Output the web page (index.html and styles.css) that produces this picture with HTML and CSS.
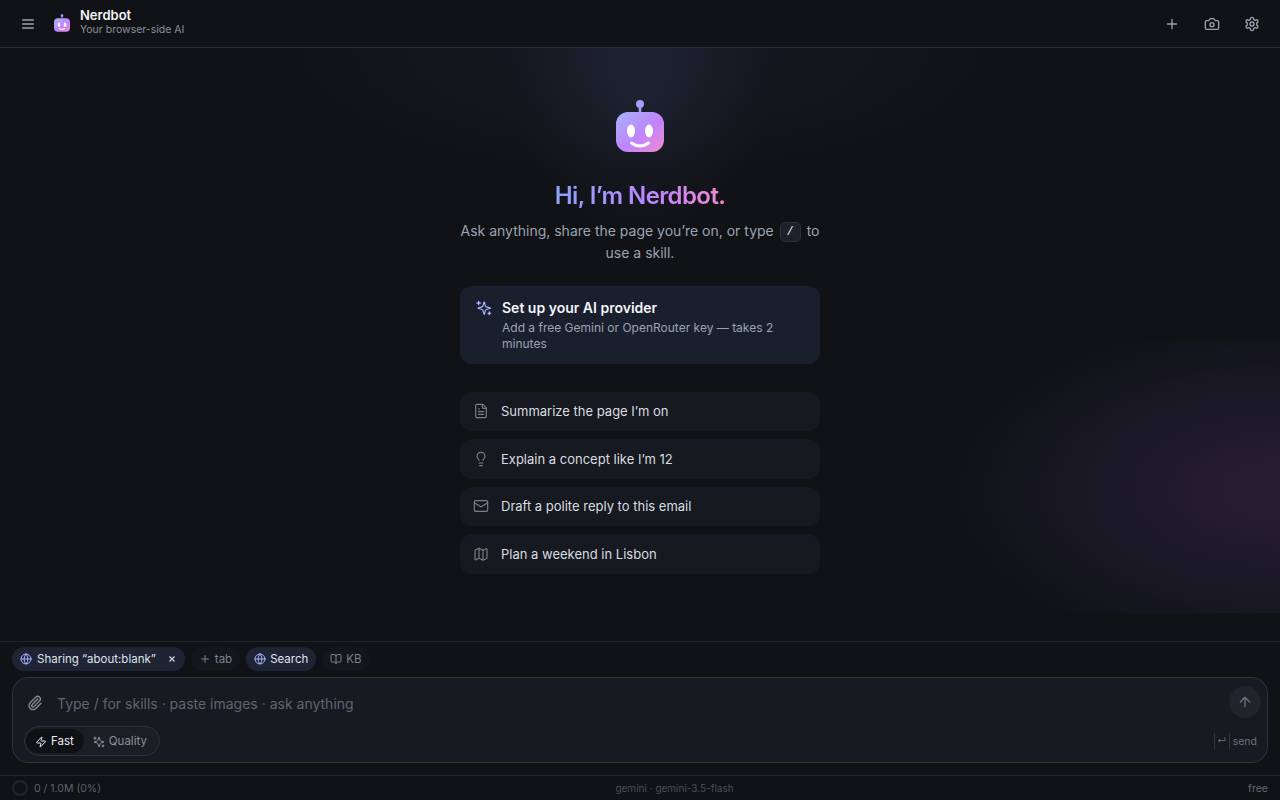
FILE: index.html
```html
<!DOCTYPE html>
<html lang="en">
<head>
<meta charset="utf-8">
<title>Nerdbot</title>
<link rel="stylesheet" href="styles.css">
</head>
<body>
<div class="app">
  <header class="topbar">
    <button class="icon-btn menu"><svg width="16" height="16" viewBox="0 0 24 24" class="ic"><path d="M4 6h16M4 12h16M4 18h16"/></svg></button>
    <svg class="brand-logo" width="16" height="18" viewBox="0 0 48 54"><defs><linearGradient id="g1" x1="0" y1="0" x2="1" y2="1"><stop offset="0" stop-color="#a5b4fc"/><stop offset="0.55" stop-color="#c084fc"/><stop offset="1" stop-color="#f08ad0"/></linearGradient></defs><circle cx="24" cy="5" r="4" fill="#a5a0fa"/><rect x="22.7" y="6" width="2.6" height="8" fill="#a5a0fa"/><rect y="13" width="48" height="40" rx="12" fill="url(#g1)"/><ellipse cx="15" cy="32" rx="4" ry="6.5" fill="#fff"/><ellipse cx="33" cy="32" rx="4" ry="6.5" fill="#fff"/><path d="M15.5 44q8.5 6 17 0" stroke="#fff" stroke-width="3" fill="none" stroke-linecap="round"/></svg>
    <div class="brand-text">
      <div class="brand-name">Nerdbot</div>
      <div class="brand-sub">Your browser-side AI</div>
    </div>
    <div class="top-actions">
      <button class="icon-btn"><svg width="16" height="16" viewBox="0 0 24 24" class="ic"><path d="M12 5v14M5 12h14"/></svg></button>
      <button class="icon-btn"><svg width="16" height="16" viewBox="0 0 24 24" class="ic"><path d="M14.5 4h-5L7 7H4a2 2 0 0 0-2 2v9a2 2 0 0 0 2 2h16a2 2 0 0 0 2-2V9a2 2 0 0 0-2-2h-3z"/><circle cx="12" cy="13" r="3"/></svg></button>
      <button class="icon-btn"><svg width="16" height="16" viewBox="0 0 24 24" class="ic"><path d="M12.22 2h-.44a2 2 0 0 0-2 2v.18a2 2 0 0 1-1 1.73l-.43.25a2 2 0 0 1-2 0l-.15-.08a2 2 0 0 0-2.73.73l-.22.38a2 2 0 0 0 .73 2.73l.15.1a2 2 0 0 1 1 1.72v.51a2 2 0 0 1-1 1.74l-.15.09a2 2 0 0 0-.73 2.73l.22.38a2 2 0 0 0 2.73.73l.15-.08a2 2 0 0 1 2 0l.43.25a2 2 0 0 1 1 1.73V20a2 2 0 0 0 2 2h.44a2 2 0 0 0 2-2v-.18a2 2 0 0 1 1-1.73l.43-.25a2 2 0 0 1 2 0l.15.08a2 2 0 0 0 2.73-.73l.22-.39a2 2 0 0 0-.73-2.73l-.15-.08a2 2 0 0 1-1-1.74v-.5a2 2 0 0 1 1-1.74l.15-.09a2 2 0 0 0 .73-2.73l-.22-.38a2 2 0 0 0-2.73-.73l-.15.08a2 2 0 0 1-2 0l-.43-.25a2 2 0 0 1-1-1.73V4a2 2 0 0 0-2-2z"/><circle cx="12" cy="12" r="3"/></svg></button>
    </div>
  </header>

  <main class="welcome">
    <svg class="hero-logo" width="48" height="54" viewBox="0 0 48 54"><defs><linearGradient id="g2" x1="0" y1="0" x2="1" y2="1"><stop offset="0" stop-color="#a5b4fc"/><stop offset="0.55" stop-color="#c084fc"/><stop offset="1" stop-color="#f08ad0"/></linearGradient></defs><circle cx="24" cy="5" r="4" fill="#a5a0fa"/><rect x="22.7" y="6" width="2.6" height="8" fill="#a5a0fa"/><rect y="13" width="48" height="40" rx="12" fill="url(#g2)"/><ellipse cx="15" cy="32" rx="4" ry="6.5" fill="#fff"/><ellipse cx="33" cy="32" rx="4" ry="6.5" fill="#fff"/><path d="M15.5 44q8.5 6 17 0" stroke="#fff" stroke-width="3" fill="none" stroke-linecap="round"/></svg>
    <h1 class="hero-title">Hi, I’m Nerdbot.</h1>
    <p class="hero-sub">Ask anything, share the page you’re on, or type <kbd class="key">/</kbd> to use a skill.</p>
    <div class="setup-card">
      <svg class="setup-ic" width="16" height="16" viewBox="0 0 24 24"><path d="M9.9 15.5a2 2 0 0 0-1.4-1.4l-6.1-1.6a.5.5 0 0 1 0-1l6.1-1.6a2 2 0 0 0 1.4-1.4l1.6-6.1a.5.5 0 0 1 1 0l1.6 6.1a2 2 0 0 0 1.4 1.4l6.1 1.6a.5.5 0 0 1 0 1l-6.1 1.6a2 2 0 0 0-1.4 1.4l-1.6 6.1a.5.5 0 0 1-1 0z" transform="translate(1.5 1.5) scale(.9)"/><path d="M4 2v5M1.5 4.5h5M20 18v4M18 20h4"/></svg>
      <div>
        <div class="setup-title">Set up your AI provider</div>
        <div class="setup-desc">Add a free Gemini or OpenRouter key — takes 2 minutes</div>
      </div>
    </div>
    <div class="suggestions">
      <div class="suggestion"><svg width="16" height="16" viewBox="0 0 24 24" class="ic"><path d="M15 2H6a2 2 0 0 0-2 2v16a2 2 0 0 0 2 2h12a2 2 0 0 0 2-2V7z"/><path d="M14 2v4a2 2 0 0 0 2 2h4M16 13H8M16 17H8M10 9H8"/></svg>Summarize the page I’m on</div>
      <div class="suggestion"><svg width="16" height="16" viewBox="0 0 24 24" class="ic"><path d="M15 14c.2-1 .7-1.7 1.5-2.5 1-.9 1.5-2.2 1.5-3.5A6 6 0 0 0 6 8c0 1 .2 2.2 1.5 3.5.7.7 1.3 1.5 1.5 2.5M9 18h6M10 22h4"/></svg>Explain a concept like I’m 12</div>
      <div class="suggestion"><svg width="16" height="16" viewBox="0 0 24 24" class="ic"><rect x="2" y="4" width="20" height="16" rx="2"/><path d="m22 7-8.97 5.7a1.94 1.94 0 0 1-2.06 0L2 7"/></svg>Draft a polite reply to this email</div>
      <div class="suggestion"><svg width="16" height="16" viewBox="0 0 24 24" class="ic"><path d="M14.1 5.9a2 2 0 0 0 1.8 0l3.7-1.8A1 1 0 0 1 21 5v12.8a1 1 0 0 1-.6.9l-4.5 2.2a2 2 0 0 1-1.8 0l-4.2-2a2 2 0 0 0-1.8 0l-3.7 1.8A1 1 0 0 1 3 19.8V7a1 1 0 0 1 .6-.9l4.5-2.2a2 2 0 0 1 1.8 0zM15 6v15M9 3v15"/></svg>Plan a weekend in Lisbon</div>
    </div>
  </main>

  <section class="composer-area">
    <div class="chips">
      <span class="chip on share"><svg width="12" height="12" viewBox="0 0 24 24" class="ic blue"><circle cx="12" cy="12" r="10"/><path d="M12 2a14.5 14.5 0 0 0 0 20 14.5 14.5 0 0 0 0-20M2 12h20"/></svg>Sharing “about:blank”<svg class="chip-x" width="10" height="10" viewBox="0 0 24 24"><path d="M6 6l12 12M18 6L6 18"/></svg></span>
      <span class="chip off"><svg width="12" height="12" viewBox="0 0 24 24" class="ic"><path d="M12 5v14M5 12h14"/></svg>tab</span>
      <span class="chip on"><svg width="12" height="12" viewBox="0 0 24 24" class="ic blue"><circle cx="12" cy="12" r="10"/><path d="M12 2a14.5 14.5 0 0 0 0 20 14.5 14.5 0 0 0 0-20M2 12h20"/></svg>Search</span>
      <span class="chip off"><svg width="12" height="12" viewBox="0 0 24 24" class="ic"><path d="M12 7v14M3 18a1 1 0 0 1-1-1V4a1 1 0 0 1 1-1h5a4 4 0 0 1 4 4 4 4 0 0 1 4-4h5a1 1 0 0 1 1 1v13a1 1 0 0 1-1 1h-6a3 3 0 0 0-3 3 3 3 0 0 0-3-3z"/></svg>KB</span>
    </div>
    <div class="composer">
      <div class="composer-top">
        <svg class="clip" width="16" height="16" viewBox="0 0 24 24"><path d="M13.234 20.252 21 12.3M16 6l-8.414 8.586a2 2 0 0 0 0 2.828 2 2 0 0 0 2.828 0l8.414-8.586a4 4 0 0 0 0-5.656 4 4 0 0 0-5.656 0l-8.415 8.585a6 6 0 1 0 8.486 8.486"/></svg>
        <div class="placeholder">Type / for skills · paste images · ask anything</div>
        <button class="send"><svg width="16" height="16" viewBox="0 0 24 24" class="ic"><path d="M12 19V5M5 12l7-7 7 7"/></svg></button>
      </div>
      <div class="composer-bottom">
        <div class="mode">
          <span class="mode-btn active"><svg width="12" height="12" viewBox="0 0 24 24" class="ic"><path d="M4 14a1 1 0 0 1-.78-1.63l9.9-10.2a.5.5 0 0 1 .86.46l-1.92 6.02A1 1 0 0 0 13 10h7a1 1 0 0 1 .78 1.63l-9.9 10.2a.5.5 0 0 1-.86-.46l1.92-6.02A1 1 0 0 0 11 14z"/></svg>Fast</span>
          <span class="mode-btn"><svg width="12" height="12" viewBox="0 0 24 24" class="ic"><path d="M9.9 15.5a2 2 0 0 0-1.4-1.4l-6.1-1.6a.5.5 0 0 1 0-1l6.1-1.6a2 2 0 0 0 1.4-1.4l1.6-6.1a.5.5 0 0 1 1 0l1.6 6.1a2 2 0 0 0 1.4 1.4l6.1 1.6a.5.5 0 0 1 0 1l-6.1 1.6a2 2 0 0 0-1.4 1.4l-1.6 6.1a.5.5 0 0 1-1 0z"/><path d="M4 2v5M1.5 4.5h5M20 18v4M18 20h4"/></svg>Quality</span>
        </div>
        <div class="send-hint"><kbd class="hint-key">↵</kbd>send</div>
      </div>
    </div>
  </section>

  <footer class="status">
    <div class="status-left"><span class="ring"></span>0 / 1.0M (0%)</div>
    <div class="status-mid">gemini · gemini-3.5-flash</div>
    <div class="status-right">free</div>
  </footer>
</div>
</body>
</html>
```

FILE: styles.css
```css
* { box-sizing: border-box; }
html, body { margin: 0; height: 100%; }
body { background: #101216; color: #e5e7eb; font-family: Inter, "Liberation Sans", sans-serif; overflow: hidden; }
.ic { fill: none; stroke: currentColor; stroke-width: 2; stroke-linecap: round; stroke-linejoin: round; flex: none; }
.ic.blue { color: #a5b4fc; }
button { background: none; border: 0; padding: 0; color: inherit; font: inherit; }
.app {
  height: 800px; display: flex; flex-direction: column;
  background:
    radial-gradient(ellipse 125px 150px at 640px 90px, rgba(60,72,110,.22), rgba(60,72,110,0) 100%) no-repeat,
    radial-gradient(ellipse 370px 130px at 640px 48px, rgba(50,62,95,.2), rgba(50,62,95,0) 100%) no-repeat,
    radial-gradient(ellipse 335px 175px at 100% 150px, rgba(72,46,92,.42), rgba(62,46,92,.24) 55%, rgba(50,46,80,0) 100%) right 340px / 340px 273px no-repeat,
    #101216;
}
.topbar { height: 48px; flex: none; display: flex; align-items: center; padding: 0 16px; border-bottom: 1px solid #2a2d33; background: #101216; }
.icon-btn { width: 24px; height: 24px; display: flex; align-items: center; justify-content: center; color: #9ca3af; }
.brand-logo { margin-left: 14px; flex: none; margin-top: -1px; }
.brand-text { margin-left: 10px; margin-top: -3px; }
.brand-name { font-size: 13px; font-weight: 600; line-height: 16px; color: #f3f4f6; }
.brand-sub { font-size: 10.5px; line-height: 14px; color: #8b909a; }
.top-actions { margin-left: auto; display: flex; gap: 16px; }
.welcome { flex: 1; min-height: 0; display: flex; flex-direction: column; align-items: center; padding-top: 51px; }
.hero-logo { flex: none; }
.hero-title { margin: 27px 0 0; font-size: 24px; line-height: 32px; font-weight: 600; letter-spacing: -0.6px; background: linear-gradient(90deg, #8ea2fb, #c084fc 60%, #f08ad0); -webkit-background-clip: text; background-clip: text; color: transparent; }
.hero-sub { width: 360px; margin: 8px 0 0; text-align: center; font-size: 14px; line-height: 21px; color: #9ca3af; }
.key { display: inline-block; margin: 0 2px; width: 21px; height: 20px; line-height: 18px; border: 1px solid #2c3038; border-radius: 5px; background: #1e2129; font-family: "Liberation Mono", monospace; font-size: 12px; color: #e5e7eb; text-align: center; vertical-align: middle; }
.setup-card { width: 360px; margin-top: 23px; height: 78px; flex: none; display: flex; gap: 10px; padding: 13px 16px; border-radius: 12px; background: #1a1f2e; }
.setup-ic { fill: none; stroke: #a5b4fc; stroke-width: 2; stroke-linecap: round; stroke-linejoin: round; flex: none; margin-top: 1px; }
.setup-title { font-size: 14px; line-height: 17px; font-weight: 600; color: #f3f4f6; }
.setup-desc { margin-top: 4px; font-size: 12px; line-height: 16px; color: #9ca3af; }
.suggestions { width: 360px; margin-top: 27.5px; display: flex; flex-direction: column; gap: 8px; }
.suggestion { height: 39.5px; display: flex; align-items: center; gap: 12px; padding: 0 13px; border-radius: 12px; background: #16191f; font-size: 13px; color: #d9dce1; }
.suggestion .ic { color: #7a808b; stroke-width: 1.7; }
.composer-area { flex: none; height: 134px; border-top: 1px solid #22252b; background: #101216; padding: 5px 12px 12px; }
.chips { display: flex; gap: 6px; height: 24px; align-items: center; }
.chip { height: 24px; display: inline-flex; align-items: center; gap: 4px; padding: 0 8px; border-radius: 12px; font-size: 11.5px; }
.chip.on { background: #1e2434; color: #dfe3ea; }
.chip.off { background: #13161b; color: #7d838d; }
.chip.share { gap: 5px; }
.chip-x { fill: none; stroke: #d5d8de; stroke-width: 2.6; margin-left: 6px; flex: none; }
.composer { margin-top: 6px; height: 86px; border: 1px solid #2e323a; border-radius: 16px; background: #171a21; padding: 9px 6px 6px 14px; display: flex; flex-direction: column; }
.composer-top { display: flex; align-items: center; height: 32px; }
.clip { fill: none; stroke: #8b909a; stroke-width: 2; stroke-linecap: round; stroke-linejoin: round; flex: none; }
.placeholder { margin-left: 14px; flex: 1; font-size: 14px; color: #5f6570; }
.send { width: 32px; height: 32px; margin-top: -2px; border-radius: 50%; background: #20242b; color: #6b7280; display: flex; align-items: center; justify-content: center; }
.composer-bottom { margin-top: auto; margin-left: -3px; display: flex; align-items: center; justify-content: space-between; padding-right: 4px; }
.mode { display: flex; height: 30px; padding: 2px 2px 2px 1px; border: 1px solid #2e323a; border-radius: 15px; background: #1b1e25; }
.mode-btn { display: inline-flex; align-items: center; gap: 4px; padding: 0 10px 0 9px; border-radius: 13px; font-size: 11.5px; color: #8b919b; }
.mode-btn .ic { margin-top: 2px; }
.mode-btn.active { background: #0f1115; color: #eceef1; }
.send-hint { display: flex; align-items: center; gap: 3px; font-size: 10.5px; color: #6b7280; }
.hint-key { width: 16px; height: 16px; border-left: 1px solid #33363e; border-right: 1px solid #33363e; font-size: 9px; text-align: center; line-height: 16px; font-family: Inter, sans-serif; }
.status { flex: none; height: 25px; display: flex; align-items: center; justify-content: space-between; padding: 0 12px; border-top: 1px solid #22252b; background: #101216; font-size: 10.5px; color: #5d636d; }
.status-left { display: flex; align-items: center; gap: 6px; }
.ring { width: 16px; height: 16px; border-radius: 50%; border: 2px solid #23262c; }
.status-mid { flex: 1; text-align: center; color: #4b5059; font-size: 10px; }
.status-right { color: #646a75; }
```
